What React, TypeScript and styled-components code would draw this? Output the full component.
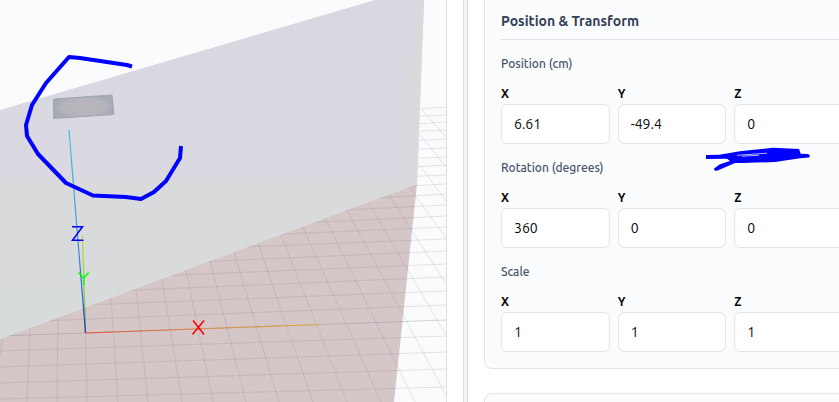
import React, { useState } from "react";
import styled, { createGlobalStyle } from "styled-components";

const GlobalStyle = createGlobalStyle`
  *, *::before, *::after { box-sizing: border-box; }
  html, body { margin: 0; padding: 0; }
  body {
    background: #ffffff;
    color: #0a0a0a;
    font-family: Ubuntu, "Noto Sans", "Open Sans", sans-serif;
    overflow: hidden;
  }
`;

const Page = styled.main`
  display: flex;
  height: 100vh;
  overflow: hidden;
`;

const ScenePane = styled.section`
  flex: 447 1 0;
  min-width: 0;
  padding-right: 16px;
`;

const Viewport = styled.div`
  height: 100%;
  background: #f9fbfd;
  border-right: 1px solid #dedede;
  overflow: hidden;
`;

const Drawing = styled.svg`
  display: block;
  width: 100%;
  height: 100%;
`;

const Splitter = styled.div`
  flex: 0 0 5px;
  background: #f4f4f4;
  border: solid #dedede;
  border-width: 0 1px;
`;

const Inspector = styled.aside`
  flex: 355 1 0;
  min-width: 0;
  padding-left: 16px;
  overflow: hidden;
`;

const Stack = styled.div`
  display: flex;
  flex-direction: column;
  gap: 24px;
  min-width: 376px;
`;

const Card = styled.section<{ $continued?: boolean }>`
  background: #fbfcfe;
  border: 1px solid #e3e5e8;
  border-top-width: ${(p) => (p.$continued ? 0 : 1)}px;
  border-radius: ${(p) => (p.$continued ? "0 0 8px 8px" : "8px")};
  padding: ${(p) => (p.$continued ? "9px" : "16px")} 16px 16px;
`;

const Title = styled.h2`
  margin: 0 0 14px;
  padding-bottom: 6px;
  border-bottom: 1px solid #e2e6ea;
  color: #334155;
  font-size: 14px;
  line-height: 24px;
  font-weight: 600;
`;

const Group = styled.fieldset`
  position: relative;
  min-width: 0;
  margin: 0;
  padding: 0;
  border: 0;

  & + & { margin-top: 14px; }
`;

const Legend = styled.legend`
  padding: 0;
  margin-bottom: 10px;
  color: #475569;
  font-family: Ubuntu, "Open Sans", "Noto Sans", sans-serif;
  font-size: 12px;
  line-height: 20px;
  font-weight: 500;
`;

const Fields = styled.div`
  display: grid;
  grid-template-columns: repeat(3, minmax(0, 1fr));
  gap: 8px;
`;

const AxisLabel = styled.label`
  display: block;
  font-size: 12px;
  line-height: 20px;
  font-weight: 600;
`;

const NumberInput = styled.input`
  display: block;
  width: 100%;
  height: 40px;
  padding: 0 12px;
  background: #ffffff;
  border: 1px solid #e5e5e5;
  border-radius: 6px;
  color: #0a0a0a;
  font: inherit;
  font-size: 14px;
  outline: none;
`;

const Scribble = styled.svg`
  position: absolute;
  top: 62px;
  left: 204px;
  width: 108px;
  height: 28px;
  pointer-events: none;
`;

type Segment = [number, number, number, number];

const crossLines: Segment[] = [
  [400, 110, 446, 107], [400, 117, 446, 115], [400, 125, 446, 122],
  [400, 132, 446, 130], [400, 141, 446, 139], [400, 150, 446, 148],
  [400, 159, 446, 157], [400, 168, 446, 165], [400, 177, 446, 175],
  [360, 189, 446, 184], [340, 200, 446, 194], [300, 212, 446, 205],
  [280, 224, 446, 216], [260, 235, 446, 227], [220, 248, 446, 239],
  [170, 263, 446, 251], [130, 277, 446, 264], [90, 292, 446, 277],
  [60, 306, 446, 291], [40, 321, 446, 305], [0, 351, 446, 336],
  [0, 367, 446, 352], [0, 383, 446, 369], [0, 399, 446, 387],
  [190, 411, 446, 404],
];

const depthLines: Segment[] = [
  [2, 339, 0, 357], [30, 328, 27, 402], [58, 318, 57, 402],
  [85, 308, 87, 402], [111, 298, 118, 402], [136, 289, 148, 402],
  [162, 279, 182, 402], [186, 270, 213, 402], [210, 261, 246, 402],
  [234, 252, 279, 402], [258, 243, 313, 402], [281, 235, 347, 402],
  [303, 227, 381, 402], [325, 218, 415, 402], [347, 210, 446, 395],
  [368, 202, 446, 335], [388, 193, 446, 284], [408, 185, 446, 238],
  [417, 162, 446, 201], [418, 132, 446, 167], [421, 109, 446, 137],
];

const toPath = (lines: Segment[]) =>
  lines.map(([x1, y1, x2, y2]) => `M${x1} ${y1}L${x2} ${y2}`).join("");

function Scene() {
  return (
    <Drawing viewBox="0 0 446 402" preserveAspectRatio="xMinYMin slice" role="img" aria-label="3D scene">
      <defs>
        <linearGradient id="wall" x1="0" y1="0" x2="0" y2="1">
          <stop offset="0" stopColor="#d9d8e0" />
          <stop offset="0.52" stopColor="#dad9e1" />
          <stop offset="0.54" stopColor="#d8dadc" />
          <stop offset="1" stopColor="#d8dbdb" />
        </linearGradient>
        <linearGradient id="wallEdge" x1="0" y1="0" x2="1" y2="0">
          <stop offset="0" stopColor="#d7dada" stopOpacity="0" />
          <stop offset="1" stopColor="#d7dada" />
        </linearGradient>
        <linearGradient id="xAxis" gradientUnits="userSpaceOnUse" x1="86" y1="0" x2="318" y2="0">
          <stop offset="0" stopColor="#e35142" />
          <stop offset="0.5" stopColor="#d98a48" />
          <stop offset="1" stopColor="#d8b03c" />
        </linearGradient>
        <linearGradient id="yAxis" gradientUnits="userSpaceOnUse" x1="0" y1="333" x2="0" y2="235">
          <stop offset="0" stopColor="#4da655" />
          <stop offset="0.4" stopColor="#8bd43c" />
          <stop offset="1" stopColor="#c3d94b" />
        </linearGradient>
        <linearGradient id="zAxis" gradientUnits="userSpaceOnUse" x1="0" y1="333" x2="0" y2="130">
          <stop offset="0" stopColor="#243fd0" />
          <stop offset="0.5" stopColor="#4c91dc" />
          <stop offset="1" stopColor="#3fc4ed" />
        </linearGradient>
        <radialGradient id="vent">
          <stop offset="0" stopColor="#b8b6bb" />
          <stop offset="0.7" stopColor="#b3b3ba" />
          <stop offset="1" stopColor="#a4a9b5" />
        </radialGradient>
        <clipPath id="floorArea">
          <path d="M0 339L417 184L421 107L446 106V402H0Z" />
        </clipPath>
      </defs>

      <path d="M0 110L375 0H424L417 184L0 339Z" fill="url(#wall)" />
      <path d="M416 0H424L417 184L395 192Z" fill="url(#wallEdge)" />
      <path d="M0 339L417 184L394 402H0Z" fill="#d5c6c7" />

      <g clipPath="url(#floorArea)" fill="none" stroke="#808086" strokeOpacity="0.19">
        <path d={toPath(crossLines)} />
        <path d={toPath(depthLines)} />
        <path d="M0 336L446 320" strokeOpacity="0.32" />
      </g>

      <path d="M53.5 99L112 95L114 114.5L53.5 118.5Z" fill="url(#vent)" stroke="#a2a8b4" />
      <path
        d="M57 101L110 98M57 104L110 101M57 107L110 104M57 110L111 107M57 113L111 110M57 116L111 113"
        stroke="#c2c0c4"
        strokeOpacity="0.3"
        fill="none"
      />

      <g fill="none">
        <path d="M85.5 333L82.5 235" stroke="url(#yAxis)" strokeWidth="1.3" />
        <path d="M85.5 333L69 130" stroke="url(#zAxis)" strokeWidth="1.2" />
        <path d="M85.5 333L318 324.5" stroke="url(#xAxis)" strokeWidth="1.2" />
        <path d="M72 226.7H82.5L72.5 240.3H83.5" stroke="#0000f5" strokeWidth="1.5" />
        <path d="M78.5 272.5L83.7 278L88.7 272.5M83.7 278V285" stroke="#00ff00" strokeWidth="1.5" />
        <path d="M193 320.5L204 334.5M204 320.5L192.5 334.5" stroke="#ff0000" strokeWidth="1.5" />
        <path
          d="M132 66.5L127 65L80 58L69 57L46 83L32 105L26 125L27 136L38 154L66 183L93 195.5L126 197L141 199L154 192L166 181L180 158L181 146"
          stroke="#0000ff"
          strokeWidth="4"
          strokeLinejoin="round"
        />
      </g>
    </Drawing>
  );
}

function ScribbleMark() {
  return (
    <Scribble viewBox="0 0 108 28" aria-hidden="true">
      <path
        d="M1 9L14.3 8.7L35 5.3L68 1.8L94 3L95.7 7.7L103 8L105 9.5L104 11.5L95 12.3L70 16L38 17L30 17L12 24.8L9.5 24.5L9 22.5L15 18.3L25 15L22 12.8L1 13Z"
        fill="#0000ff"
      />
      <path d="M32 9.3L62 7.2M37 10.2L54 9.2" stroke="#dfe2fd" strokeWidth="0.8" fill="none" />
    </Scribble>
  );
}

const axes = ["X", "Y", "Z"];

interface VectorGroupProps {
  legend: string;
  initial: string[];
  children?: React.ReactNode;
}

function VectorGroup({ legend, initial, children }: VectorGroupProps) {
  const [values, setValues] = useState(initial);
  const prefix = legend.split(" ")[0].toLowerCase();
  return (
    <Group>
      <Legend>{legend}</Legend>
      <Fields>
        {axes.map((axis, i) => (
          <div key={axis}>
            <AxisLabel htmlFor={`${prefix}-${axis}`}>{axis}</AxisLabel>
            <NumberInput
              id={`${prefix}-${axis}`}
              inputMode="decimal"
              value={values[i]}
              onChange={(e) => setValues(values.map((v, j) => (j === i ? e.target.value : v)))}
            />
          </div>
        ))}
      </Fields>
      {children}
    </Group>
  );
}

export default function App() {
  return (
    <>
      <GlobalStyle />
      <Page>
        <ScenePane>
          <Viewport>
            <Scene />
          </Viewport>
        </ScenePane>
        <Splitter role="separator" aria-orientation="vertical" />
        <Inspector>
          <Stack>
            <Card $continued>
              <Title>Position &amp; Transform</Title>
              <VectorGroup legend="Position (cm)" initial={["6.61", "-49.4", "0"]}>
                <ScribbleMark />
              </VectorGroup>
              <VectorGroup legend="Rotation (degrees)" initial={["360", "0", "0"]} />
              <VectorGroup legend="Scale" initial={["1", "1", "1"]} />
            </Card>
            <Card />
          </Stack>
        </Inspector>
      </Page>
    </>
  );
}
